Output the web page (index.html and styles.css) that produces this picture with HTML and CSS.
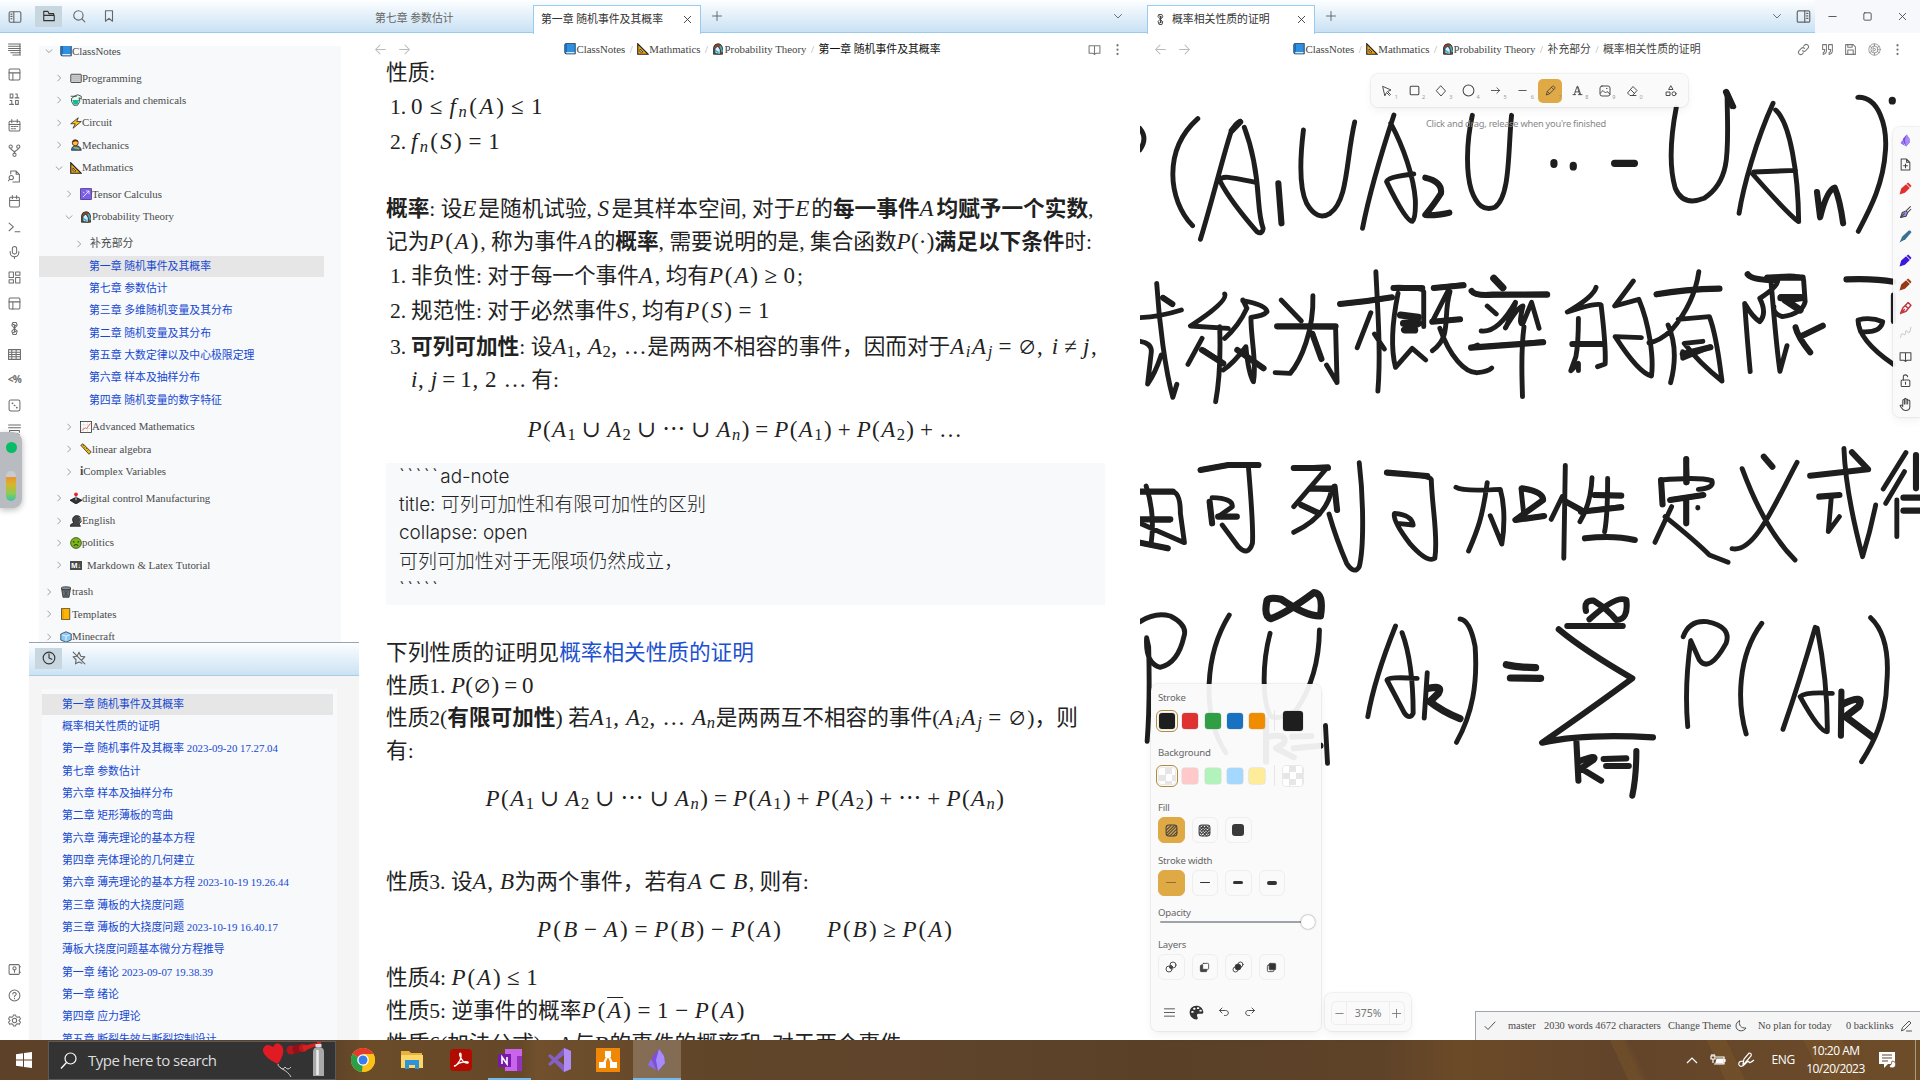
FILE: index.html
```html
<!DOCTYPE html>
<html lang="zh-CN">
<head>
<meta charset="utf-8">
<title>第一章 随机事件及其概率</title>
<link rel="stylesheet" href="styles.css">
</head>
<body>
<svg class="defs" width="0" height="0">
  <symbol id="panel" viewBox="0 0 24 24"><rect x="2" y="3" width="20" height="18" rx="2"/><path d="M10 3v18M5 7h2M5 11h2M5 15h2"/></symbol>
  <symbol id="panelr" viewBox="0 0 24 24"><rect x="2" y="3" width="20" height="18" rx="2"/><path d="M14 3v18M17 7h2M17 11h2M17 15h2"/></symbol>
  <symbol id="folder" viewBox="0 0 24 24"><path d="M3 20V4h7l2 4h8v3M3 11h18v9H3z"/></symbol>
  <symbol id="search" viewBox="0 0 24 24"><circle cx="11" cy="11" r="8"/><path d="m17 17 5 5"/></symbol>
  <symbol id="bookmark" viewBox="0 0 24 24"><path d="M6 3h12v18l-6-5-6 5z"/></symbol>
  <symbol id="x" viewBox="0 0 24 24"><path d="M5 5l14 14M19 5L5 19"/></symbol>
  <symbol id="plus" viewBox="0 0 24 24"><path d="M12 3v18M3 12h18"/></symbol>
  <symbol id="minus" viewBox="0 0 24 24"><path d="M4 12h16"/></symbol>
  <symbol id="down" viewBox="0 0 24 24"><path d="m5 9 7 7 7-7"/></symbol>
  <symbol id="right" viewBox="0 0 24 24"><path d="m9 5 7 7-7 7"/></symbol>
  <symbol id="square" viewBox="0 0 24 24"><rect x="4" y="4" width="16" height="16" rx="2"/></symbol>
  <symbol id="left-arrow" viewBox="0 0 24 24"><path d="M21 12H3m8-8-8 8 8 8"/></symbol>
  <symbol id="right-arrow" viewBox="0 0 24 24"><path d="M3 12h18m-8-8 8 8-8 8"/></symbol>
  <symbol id="openbook" viewBox="0 0 24 24"><path d="M12 6v15M12 5H2v14h7l3 2 3-2h7V5z"/></symbol>
  <symbol id="dots" viewBox="0 0 24 24"><path d="M12 4v.5M12 12v.5M12 20v.5" stroke-width="4"/></symbol>
  <symbol id="lines" viewBox="0 0 24 24"><path d="M1 2h22M1 6h22M1 10h22M1 14h22M5 18h18M9 22h14M22 2v20"/></symbol>
  <symbol id="layout" viewBox="0 0 24 24"><rect x="2" y="2" width="20" height="20" rx="2"/><path d="M2 9h20M9 9v13"/></symbol>
  <symbol id="binary" viewBox="0 0 24 24"><rect x="4" y="2" width="5" height="7"/><rect x="14" y="14" width="5" height="7"/><path d="M14 2h3v7M13 9h7M4 14h3v7M3 21h7"/></symbol>
  <symbol id="calendar" viewBox="0 0 24 24"><rect x="2" y="4" width="20" height="18" rx="2"/><path d="M2 10h20M7 1v6M17 1v6M6 14h3M11 14h3M16 14h2M6 18h3M11 18h3"/></symbol>
  <symbol id="cal" viewBox="0 0 24 24"><rect x="3" y="4" width="18" height="18" rx="2"/><path d="M3 10h18M8 1v6M16 1v6"/></symbol>
  <symbol id="fork" viewBox="0 0 24 24"><circle cx="5" cy="5" r="3"/><circle cx="19" cy="5" r="3"/><circle cx="12" cy="20" r="3"/><path d="M5 8c0 5 7 2 7 9 0-7 7-4 7-9"/></symbol>
  <symbol id="filesearch" viewBox="0 0 24 24"><path d="M5 7V2h10l6 6v14H9M15 2v6h6"/><circle cx="6" cy="14" r="4"/><path d="m3 17-2 3"/></symbol>
  <symbol id="terminal" viewBox="0 0 24 24"><path d="m2 4 8 7-8 7M13 20h9"/></symbol>
  <symbol id="mic" viewBox="0 0 24 24"><rect x="8" y="1" width="8" height="14" rx="4"/><path d="M4 10v2a8 8 0 0 0 16 0v-2M12 20v3"/></symbol>
  <symbol id="dash" viewBox="0 0 24 24"><path d="M2 2h8v10H2zM14 2h8v6h-8zM14 12h8v10h-8zM2 16h8v6H2z"/></symbol>
  <symbol id="knot" viewBox="0 0 24 24"><path d="M9 1h6l2 5-5 6-5-6zM12 12l5 5-2 6H9l-2-6z"/><path d="M9 4l6 3M9 20l6-3M12 5v14"/></symbol>
  <symbol id="table" viewBox="0 0 24 24"><path d="M1 3h22v18H1zM1 8h22M1 12h22M1 16h22M7 3v18M15 3v18"/></symbol>
  <symbol id="dice" viewBox="0 0 24 24"><rect x="2" y="2" width="20" height="20" rx="3"/><path d="M8 8h.5M12 12h.5M16 16h.5" stroke-width="3"/></symbol>
  <symbol id="rowplus" viewBox="0 0 24 24"><path d="M1 2h22M1 7h22M3 12h18v3M3 12v9h11M18 17v6M15 20h6"/></symbol>
  <symbol id="vault" viewBox="0 0 24 24"><rect x="2" y="3" width="19" height="18" rx="2"/><circle cx="12" cy="10" r="3"/><path d="M12 13v4M21 7h2M21 17h2"/></symbol>
  <symbol id="help" viewBox="0 0 24 24"><circle cx="12" cy="12" r="10"/><path d="M9 9c0-4 7-3 6 1-1 2-3 2-3 4M12 17v1"/></symbol>
  <symbol id="gear" viewBox="0 0 24 24"><circle cx="12" cy="12" r="4"/><path d="M10 2h4l1 3 3 1 3-1 2 4-3 3 3 3-2 4-3-1-3 1-1 3h-4l-1-3-3-1-3 1-2-4 3-3-3-3 2-4 3 1 3-1z"/></symbol>
  <symbol id="clock" viewBox="0 0 24 24"><circle cx="12" cy="12" r="10"/><path d="M12 5v7l5 2"/></symbol>
  <symbol id="staroff" viewBox="0 0 24 24"><path d="M2 2l20 20M9 8l3-6 3 7 7 1-5 5M8 9l-6 1 5 5-1 7 6-3 5 2"/></symbol>
  <symbol id="link" viewBox="0 0 24 24"><path d="M10 14c2 2 4 2 6 0l4-4c4-4-2-10-6-6l-2 2M14 10c-2-2-4-2-6 0l-4 4c-4 4 2 10 6 6l2-2"/></symbol>
  <symbol id="quote" viewBox="0 0 24 24"><path d="M3 3h7v11q0 6-6 7v-3q3-1 3-6H3zM14 3h7v11q0 6-6 7v-3q3-1 3-6h-4z"/></symbol>
  <symbol id="save" viewBox="0 0 24 24"><path d="M3 3h14l4 4v14H3zM7 3v5h8V3M7 21v-8h10v8"/></symbol>
  <symbol id="atom" viewBox="0 0 24 24"><g stroke-width="1.300"><circle cx="12" cy="12" r="10.500"/><circle cx="12" cy="12" r="6.500"/><path d="M10 9l5 3-5 3zM3 6l3 2M18 16l3 2M21 6l-3 2M6 16l-3 2M12 2v4M12 18v4"/></g></symbol>
  <symbol id="moon" viewBox="0 0 24 24"><path d="M9 2C7 10 12 17 22 16 17 25 2 23 2 12 2 7 5 3 9 2z"/></symbol>
  <symbol id="check" viewBox="0 0 24 24"><path d="m2 13 6 6L22 4"/></symbol>
  <symbol id="edit" viewBox="0 0 24 24"><path d="m3 21 2-6L18 2l4 4L9 19zM13 22h10"/></symbol>
  <symbol id="cursor" viewBox="0 0 24 24"><path d="m4 3 16 7-7 3 6 6-2 2-6-6-3 6z"/></symbol>
  <symbol id="diamond" viewBox="0 0 24 24"><path d="m12 2 9 10-9 10L3 12z"/></symbol>
  <symbol id="circle" viewBox="0 0 24 24"><circle cx="12" cy="12" r="10"/></symbol>
  <symbol id="arrow" viewBox="0 0 24 24"><path d="M3 12h18m-6-6 6 6-6 6"/></symbol>
  <symbol id="pencil" viewBox="0 0 24 24"><path d="m3 21 2-7L16 3c3-2 7 2 5 5L10 19zM14 5l5 5M5 14l5 5"/></symbol>
  <symbol id="lettera" viewBox="0 0 24 24"><path d="M2 21h6M14 21h8M5 21 11 3h2l6 18M12 5l5 16M7 15h8"/></symbol>
  <symbol id="image" viewBox="0 0 24 24"><rect x="2" y="2" width="20" height="20" rx="4"/><path d="m3 16 5-5 5 5 3-3 6 5M15 7h1"/></symbol>
  <symbol id="eraser" viewBox="0 0 24 24"><path d="M20 21H8l-5-5L14 3l8 8-9 10M9 9l8 8"/></symbol>
  <symbol id="shapes" viewBox="0 0 24 24"><path d="m12 2 4 7H8zM3 14h7v7H3z"/><circle cx="18" cy="17.500" r="4"/></symbol>
  <symbol id="fileplus" viewBox="0 0 24 24"><path d="M4 2h10l6 6v14H4zM14 2v6h6M12 11v7M8.500 14.500h7"/></symbol>
  <symbol id="pen" viewBox="0 0 24 24"><path d="M1 23 4 12 13 4l7 7-9 9zM14 3l3-2 6 6-2 3z" fill="currentColor" stroke="none"/></symbol>
  <symbol id="brush" viewBox="0 0 24 24"><path d="M1 23 6 12 18 1q4-1 5 3L12 17z" fill="currentColor" stroke="none"/></symbol>
  <symbol id="nib" viewBox="0 0 24 24"><path d="m3 21 3-9 7-3 3 3-3 7z" fill="#9b8ff0"/><path d="M14 8l7-7M17 11l5-5M3 21l7-7"/></symbol>
  <symbol id="nib2" viewBox="0 0 24 24"><path d="m3 21 4-10L17 1l5 5-9 11zM12 7l5 5M3 21l7-7" stroke-width="2.800"/></symbol>
  <symbol id="crystal" viewBox="0 0 24 24"><path d="M14 1 7 9l1 6 5 8 7-8-1-7z" fill="#7c50df" stroke="none"/><path d="m14 1-3 11 2 11 7-8-1-7z" fill="#a78bfa" stroke="none"/><path d="m6 11-3 6 8 5-3-7z" fill="#8f6af0" stroke="none"/></symbol>
  <symbol id="squiggle" viewBox="0 0 24 24"><path d="M3 21q1-9 5-6t4-3 4-1 6-9"/></symbol>
  <symbol id="unlock" viewBox="0 0 24 24"><rect x="4" y="11" width="16" height="12" rx="2"/><path d="M8 11V5c0-5 8-4 8 0M12 15v4"/></symbol>
  <symbol id="hand" viewBox="0 0 24 24"><path d="M7 14V5c0-3 3-3 3 0v6V3c0-3 3-3 3 0v8V4c0-3 3-3 3 0v7-5c0-3 4-3 4 0v10q0 7-8 7c-5 0-7-4-10-9 2-2 4-1 5 2"/></symbol>
  <symbol id="menu" viewBox="0 0 24 24"><path d="M1 4h22M1 12h22M1 20h22"/></symbol>
  <symbol id="undo" viewBox="0 0 24 24"><path d="M8 4 3 9l5 5M3 9h12c8 0 7 10 0 10h-2"/></symbol>
  <symbol id="redo" viewBox="0 0 24 24"><path d="m16 4 5 5-5 5M21 9H9c-8 0-7 10 0 10h2"/></symbol>
  <symbol id="palette" viewBox="0 0 24 24"><path d="M12 1C5 1 1 6 1 12s5 11 11 11c3 0 2-3 1-5-1-3 1-4 4-4 4 0 6 0 6-3C22 5 18 1 12 1z" fill="#333" stroke="none"/><path d="M5 11h1M8 6h1M14 5h1M18 9h1" stroke="#fff" stroke-width="3"/></symbol>
  <symbol id="s-back" viewBox="0 0 24 24"><circle cx="8" cy="16" r="6"/><circle cx="16" cy="8" r="6"/><circle cx="12" cy="12" r="3" fill="currentColor"/></symbol>
  <symbol id="s-down" viewBox="0 0 24 24"><rect x="3" y="7" width="14" height="14" rx="2" fill="#444"/><rect x="8" y="3" width="13" height="13" rx="2" fill="#fff"/></symbol>
  <symbol id="s-up" viewBox="0 0 24 24"><circle cx="7" cy="17" r="5"/><circle cx="17" cy="7" r="5"/><circle cx="12" cy="12" r="6" fill="#333"/></symbol>
  <symbol id="s-front" viewBox="0 0 24 24"><rect x="3" y="7" width="14" height="14" rx="2"/><rect x="7" y="3" width="14" height="14" rx="2" fill="#333"/></symbol>
  <symbol id="hatch" viewBox="0 0 24 24"><rect x="2" y="2" width="20" height="20" rx="5"/><path d="M3 11l8-8M3 17 17 3M4 21 21 4M9 22 22 9M15 22l7-7"/></symbol>
  <symbol id="cross" viewBox="0 0 24 24"><rect x="2" y="2" width="20" height="20" rx="5"/><path d="M3 11l8-8M3 17 17 3M4 21 21 4M9 22 22 9M15 22l7-7M13 3l8 8M7 3l14 14M3 4l17 17M3 9l13 13M3 15l6 6"/></symbol>

  <symbol id="e-book" viewBox="0 0 16 16"><path d="M3 .5h12v14H3q-2 0-2-2v-10q0-2 2-2z" fill="#2f8fe0" stroke="#123" /><path d="M3 13h11" stroke="#fff" stroke-width="1.500"/><path d="M3 1v11" stroke="#124f9b"/></symbol>
  <symbol id="e-kbd" viewBox="0 0 16 16"><rect x="1" y="3" width="14" height="11" rx="1" fill="#ccc" stroke="#222"/><path d="M3 6h10M3 8.500h10M4 11h8" stroke="#aaa" stroke-dasharray="1.500 .7"/></symbol>
  <symbol id="e-flask" viewBox="0 0 16 16"><path d="M6 3q4-4 9 0v4l-3-2 1 5-3 5H5l-3-5V6z" fill="#dfe" stroke="#222"/><path d="M3 8h9l-2 6H5z" fill="#17b897"/><path d="M1 3h8" stroke="#222"/></symbol>
  <symbol id="e-bolt" viewBox="0 0 16 16"><path d="M11 1 1 9h6l-3 6L15 6H9z" fill="#ffc21a" stroke="#222"/></symbol>
  <symbol id="e-person" viewBox="0 0 16 16"><path d="M2 15q0-6 6-6t7 6z" fill="#1c7fc9" stroke="#222"/><circle cx="7" cy="5" r="4" fill="#ffbd3b" stroke="#222"/><path d="M3 5q0-4 4-4t4 3l-4-1z" fill="#6a2a18"/><path d="m5 11 7 2" stroke="#f90" stroke-width="2"/></symbol>
  <symbol id="e-tri" viewBox="0 0 16 16"><path d="M1 1v14h14z" fill="#f0a30e" stroke="#222" stroke-width="1.500"/><path d="M4 8v4h4z" fill="#fff" stroke="#222"/></symbol>
  <symbol id="e-tensor" viewBox="0 0 16 16"><rect x=".5" y=".5" width="15" height="15" rx="1" fill="#7d5fe6" stroke="#35247a"/><path d="m4 12 8-8M8 4h4v4M4 5l2 2" stroke="#fff" fill="none"/></symbol>
  <symbol id="e-brain" viewBox="0 0 16 16"><path d="M2 15V6q1-5 6-5t6 6v8z" fill="#8c4a34" stroke="#222"/><path d="M4 14V7l4-3 3 5v6z" fill="#cfeeff" stroke="#222"/><path d="M4 10l5 3M11 4l3 8" stroke="#26b6ce" stroke-width="2"/></symbol>
  <symbol id="e-chart" viewBox="0 0 16 16"><rect x=".8" y=".8" width="14.400" height="14.400" fill="#fff" stroke="#222"/><path d="M1 5h14M1 10h14M5 1v14M10 1v14" stroke="#ccc" stroke-width=".6"/><path d="m2 13 5-4 2 1 5-7" fill="none" stroke="#e7422c"/></symbol>
  <symbol id="e-ruler" viewBox="0 0 16 16"><path d="m1 3 3-2 11 11-3 3z" fill="#f1b71c" stroke="#222"/><path d="m5 3-1 1m3 1-1 1m3 1-1 1m3 1-1 1" stroke="#222"/></symbol>
  <symbol id="e-joy" viewBox="0 0 16 16"><path d="m0 11 8-4 8 4-8 5z" fill="#333" stroke="#111"/><path d="M8 4v7" stroke="#999" stroke-width="2"/><circle cx="8" cy="3" r="2.500" fill="#e5232b"/></symbol>
  <symbol id="e-head" viewBox="0 0 16 16"><path d="M0 15q1-4 5-4-4-7 2-10 7-1 7 4l1 4-3 3 2 3z" fill="#444" stroke="#111"/><path d="M12 3l3 2-2 5" stroke="#aaa" fill="none"/></symbol>
  <symbol id="e-sick" viewBox="0 0 16 16"><circle cx="8" cy="8" r="7.200" fill="#7db61c" stroke="#243d05"/><path d="M4 6l2 1M12 6l-2 1M5 12q3-4 6 0" stroke="#243d05" fill="none" stroke-width="1.400"/></symbol>
  <symbol id="e-trash" viewBox="0 0 16 16"><path d="m2 3 2 12h8l2-12z" fill="#667078" stroke="#222"/><ellipse cx="8" cy="3" rx="6.500" ry="2" fill="#89939b" stroke="#222"/><path d="m5 6 6 8M11 6l-6 8M8 6v8" stroke="#333" stroke-width=".6"/></symbol>
  <symbol id="e-yellow" viewBox="0 0 16 16"><path d="M2 .5h11v15H2z" fill="#ffb400" stroke="#333"/><path d="M4 1v14" stroke="#d58b00"/></symbol>
  <symbol id="e-ice" viewBox="0 0 16 16"><path d="m1 4 7-3 7 3v8l-7 3-7-3z" fill="#8cc9f5" stroke="#234"/><path d="m3 5 5 2 5-2M8 7v6" stroke="#fff" fill="none"/></symbol>
</svg>

<div class="app">
  <header class="titlebar">
    <div class="tb-ribbon"><svg class="i s14"><use href="#panel"/></svg></div>
    <div class="tb-side">
      <span class="hbtn on"><svg class="i s14"><use href="#folder"/></svg></span>
      <span class="hbtn"><svg class="i s14"><use href="#search"/></svg></span>
      <span class="hbtn"><svg class="i s14"><use href="#bookmark"/></svg></span>
    </div>
    <div class="tb-main">
      <div class="tab first">第七章 参数估计</div>
      <div class="tab active"><span>第一章 随机事件及其概率</span><svg class="i s11"><use href="#x"/></svg></div>
      <svg class="i s12 plus"><use href="#plus"/></svg>
      <svg class="i s12 push"><use href="#down"/></svg>
    </div>
    <div class="tb-right">
      <div class="tab active excal"><svg class="i s11"><use href="#knot"/></svg><span>概率相关性质的证明</span><svg class="i s11 close"><use href="#x"/></svg></div>
      <svg class="i s12 plus"><use href="#plus"/></svg>
      <svg class="i s12 push"><use href="#down"/></svg>
      <svg class="i s15"><use href="#panelr"/></svg>
    </div>
    <div class="winctl">
      <svg class="i s11"><use href="#minus"/></svg><svg class="i s11"><use href="#square"/></svg><svg class="i s11"><use href="#x"/></svg>
    </div>
  </header>

  <div class="workspace">
    <nav class="ribbon">
      <svg class="i"><use href="#lines"/></svg><svg class="i"><use href="#layout"/></svg><svg class="i"><use href="#binary"/></svg><svg class="i"><use href="#calendar"/></svg><svg class="i"><use href="#fork"/></svg><svg class="i"><use href="#filesearch"/></svg><svg class="i"><use href="#cal"/></svg><svg class="i"><use href="#terminal"/></svg><svg class="i"><use href="#mic"/></svg><svg class="i"><use href="#dash"/></svg><svg class="i"><use href="#layout"/></svg><svg class="i"><use href="#knot"/></svg><svg class="i"><use href="#table"/></svg><span class="tmpl">&lt;%</span><svg class="i"><use href="#dice"/></svg><svg class="i"><use href="#rowplus"/></svg>
      <svg class="i bottom"><use href="#vault"/></svg><svg class="i"><use href="#help"/></svg><svg class="i"><use href="#gear"/></svg>
      <div class="meter"><i></i><b></b></div>
    </nav>

    <aside class="sidebar">
      <div class="tree">
        <div class="row"><svg class="i c"><use href="#down"/></svg><svg class="e"><use href="#e-book"/></svg>ClassNotes</div>
        <div class="kids">
          <div class="row"><svg class="i c"><use href="#right"/></svg><svg class="e"><use href="#e-kbd"/></svg>Programming</div>
          <div class="row"><svg class="i c"><use href="#right"/></svg><svg class="e"><use href="#e-flask"/></svg>materials and chemicals</div>
          <div class="row"><svg class="i c"><use href="#right"/></svg><svg class="e"><use href="#e-bolt"/></svg>Circuit</div>
          <div class="row"><svg class="i c"><use href="#right"/></svg><svg class="e"><use href="#e-person"/></svg>Mechanics</div>
          <div class="row"><svg class="i c"><use href="#down"/></svg><svg class="e"><use href="#e-tri"/></svg>Mathmatics</div>
          <div class="kids">
            <div class="row"><svg class="i c"><use href="#right"/></svg><svg class="e"><use href="#e-tensor"/></svg>Tensor Calculus</div>
            <div class="row"><svg class="i c"><use href="#down"/></svg><svg class="e"><use href="#e-brain"/></svg>Probability Theory</div>
            <div class="kids">
              <div class="row"><svg class="i c"><use href="#right"/></svg>补充部分</div>
              <div class="row file sel">第一章 随机事件及其概率</div>
              <div class="row file">第七章 参数估计</div>
              <div class="row file">第三章 多维随机变量及其分布</div>
              <div class="row file">第二章 随机变量及其分布</div>
              <div class="row file">第五章 大数定律以及中心极限定理</div>
              <div class="row file">第六章 样本及抽样分布</div>
              <div class="row file">第四章 随机变量的数字特征</div>
            </div>
            <div class="row"><svg class="i c"><use href="#right"/></svg><svg class="e"><use href="#e-chart"/></svg>Advanced Mathematics</div>
            <div class="row"><svg class="i c"><use href="#right"/></svg><svg class="e"><use href="#e-ruler"/></svg>linear algebra</div>
            <div class="row"><svg class="i c"><use href="#right"/></svg><b>i</b>Complex Variables</div>
          </div>
          <div class="row"><svg class="i c"><use href="#right"/></svg><svg class="e"><use href="#e-joy"/></svg>digital control Manufacturing</div>
          <div class="row"><svg class="i c"><use href="#right"/></svg><svg class="e"><use href="#e-head"/></svg>English</div>
          <div class="row"><svg class="i c"><use href="#right"/></svg><svg class="e"><use href="#e-sick"/></svg>politics</div>
          <div class="row"><svg class="i c"><use href="#right"/></svg><span class="md">M↓</span>Markdown &amp; Latex Tutorial</div>
        </div>
        <div class="row"><svg class="i c"><use href="#right"/></svg><svg class="e"><use href="#e-trash"/></svg>trash</div>
        <div class="row"><svg class="i c"><use href="#right"/></svg><svg class="e"><use href="#e-yellow"/></svg>Templates</div>
        <div class="row"><svg class="i c"><use href="#right"/></svg><svg class="e"><use href="#e-ice"/></svg>Minecraft</div>
      </div>
      <div class="recent-head">
        <span class="hbtn on"><svg class="i s14"><use href="#clock"/></svg></span>
        <span class="hbtn"><svg class="i s14"><use href="#staroff"/></svg></span>
      </div>
      <div class="recent">
        <div class="list">
          <div class="sel">第一章 随机事件及其概率</div>
          <div>概率相关性质的证明</div>
          <div>第一章 随机事件及其概率 2023-09-20 17.27.04</div>
          <div>第七章 参数估计</div>
          <div>第六章 样本及抽样分布</div>
          <div>第二章 矩形薄板的弯曲</div>
          <div>第六章 薄壳理论的基本方程</div>
          <div>第四章 壳体理论的几何建立</div>
          <div>第六章 薄壳理论的基本方程 2023-10-19 19.26.44</div>
          <div>第三章 薄板的大挠度问题</div>
          <div>第三章 薄板的大挠度问题 2023-10-19 16.40.17</div>
          <div>薄板大挠度问题基本微分方程推导</div>
          <div>第一章 绪论 2023-09-07 19.38.39</div>
          <div>第一章 绪论</div>
          <div>第四章 应力理论</div>
          <div>第五章 断裂失效与断裂控制设计</div>
        </div>
      </div>
    </aside>

    <main class="note">
      <div class="viewhead">
        <div class="nav"><svg class="i s13"><use href="#left-arrow"/></svg><svg class="i s13"><use href="#right-arrow"/></svg></div>
        <div class="crumbs"><svg class="e"><use href="#e-book"/></svg>ClassNotes<s>/</s><svg class="e"><use href="#e-tri"/></svg>Mathmatics<s>/</s><svg class="e"><use href="#e-brain"/></svg>Probability Theory<s>/</s><em>第一章 随机事件及其概率</em></div>
        <div class="acts"><svg class="i s13"><use href="#openbook"/></svg><svg class="i s13"><use href="#dots"/></svg></div>
      </div>
      <article class="doc">
        <p>性质:</p>
        <p class="li"><span>1.</span><span class="m" data-w="134">0<q>≤</q><i>f<sub>n</sub></i>(<i>A</i>)<q>≤</q>1</span></p>
        <p class="li"><span>2.</span><span class="m" data-w="91"><i>f<sub>n</sub></i>(<i>S</i>)<q>=</q>1</span></p>
        <p><b>概率</b>: 设<span class="m" data-w="16"><i>E</i></span>是随机试验, <span class="m" data-w="14"><i>S</i></span>是其样本空间, 对于<span class="m" data-w="16"><i>E</i></span>的<b>每一事件</b><span class="m" data-w="17"><i>A</i></span><b>均赋予一个实数</b>,</p>
        <p>记为<span class="m" data-w="51"><i>P</i>(<i>A</i>)</span>, 称为事件<span class="m" data-w="16"><i>A</i></span>的<b>概率</b>, 需要说明的是, 集合函数<span class="m" data-w="38"><i>P</i>(·)</span><b>满足以下条件</b>时:</p>
        <p class="li"><span>1.</span>非负性: 对于每一个事件<span class="m" data-w="16"><i>A</i></span>, 均有<span class="m" data-w="88"><i>P</i>(<i>A</i>)<q>≥</q>0</span>;</p>
        <p class="li"><span>2.</span>规范性: 对于必然事件<span class="m" data-w="14"><i>S</i></span>, 均有<span class="m" data-w="86"><i>P</i>(<i>S</i>)<q>=</q>1</span></p>
        <p class="li"><span>3.</span><b>可列可加性</b>: 设<span class="m" data-w="95"><i>A</i><sub>1</sub>, <i>A</i><sub>2</sub>, …</span>是两两不相容的事件，因而对于<span class="m" data-w="148"><i>A<sub>i</sub>A<sub>j</sub></i><q>=</q><tt>∅</tt>, <i>i</i><q>≠</q><i>j</i>,</span></p>
        <p class="li"><span></span><span class="m" data-w="116"><i>i</i>, <i>j</i><q>=</q>1, 2 …</span>&thinsp;有:</p>
        <p class="eq"><span class="m" data-w="436"><i>P</i>(<i>A</i><sub>1</sub><q>∪</q><i>A</i><sub>2</sub><q>∪</q>⋯<q>∪</q><i>A<sub>n</sub></i>)<q>=</q><i>P</i>(<i>A</i><sub>1</sub>)<q>+</q><i>P</i>(<i>A</i><sub>2</sub>)<q>+</q>…</span></p>
        <div class="code"><div><kbd>`````</kbd>ad-note</div><div>title: 可列可加性和有限可加性的区别</div><div>collapse: open</div><div>可列可加性对于无限项仍然成立，</div><div><kbd>`````</kbd></div></div>
        <p>下列性质的证明见<a>概率相关性质的证明</a></p>
        <p>性质1. <span class="m" data-w="83"><i>P</i>(<tt>∅</tt>)<q>=</q>0</span></p>
        <p>性质2(<b>有限可加性</b>) 若<span class="m" data-w="126"><i>A</i><sub>1</sub>, <i>A</i><sub>2</sub>, … <i>A<sub>n</sub></i></span>是两两互不相容的事件(<span class="m" data-w="88"><i>A<sub>i</sub>A<sub>j</sub></i><q>=</q><tt>∅</tt></span>)，则</p>
        <p>有:</p>
        <p class="eq"><span class="m" data-w="520"><i>P</i>(<i>A</i><sub>1</sub><q>∪</q><i>A</i><sub>2</sub><q>∪</q>⋯<q>∪</q><i>A<sub>n</sub></i>)<q>=</q><i>P</i>(<i>A</i><sub>1</sub>)<q>+</q><i>P</i>(<i>A</i><sub>2</sub>)<q>+</q>⋯<q>+</q><i>P</i>(<i>A<sub>n</sub></i>)</span></p>
        <p>性质3. 设<span class="m" data-w="42"><i>A</i>, <i>B</i></span>为两个事件，若有<span class="m" data-w="61"><i>A</i><q>⊂</q><i>B</i></span>, 则有:</p>
        <p class="eq gap"><span class="m" data-w="246"><i>P</i>(<i>B</i><q>−</q><i>A</i>)<q>=</q><i>P</i>(<i>B</i>)<q>−</q><i>P</i>(<i>A</i>)</span><span class="m" data-w="127"><i>P</i>(<i>B</i>)<q>≥</q><i>P</i>(<i>A</i>)</span></p>
        <p>性质4: <span class="m" data-w="88"><i>P</i>(<i>A</i>)<q>≤</q>1</span></p>
        <p>性质5: 逆事件的概率<span class="m" data-w="165"><i>P</i>(<i class="bar">A</i>)<q>=</q>1<q>−</q><i>P</i>(<i>A</i>)</span></p>
        <p>性质6(加法公式) : A与B的事件的概率和, 对于两个事件</p>
      </article>
    </main>

    <section class="board">
      <div class="viewhead">
        <div class="nav"><svg class="i s13"><use href="#left-arrow"/></svg><svg class="i s13"><use href="#right-arrow"/></svg></div>
        <div class="crumbs"><svg class="e"><use href="#e-book"/></svg>ClassNotes<s>/</s><svg class="e"><use href="#e-tri"/></svg>Mathmatics<s>/</s><svg class="e"><use href="#e-brain"/></svg>Probability Theory<s>/</s>补充部分<s>/</s>概率相关性质的证明</div>
        <div class="acts"><svg class="i s13"><use href="#link"/></svg><svg class="i s13"><use href="#quote"/></svg><svg class="i s13"><use href="#save"/></svg><svg class="i s13"><use href="#atom"/></svg><svg class="i s13"><use href="#dots"/></svg></div>
      </div>
      <svg class="ink" viewBox="1140 63 780 977">
        <g transform="translate(1100 0) scale(.52296 .33333)">
          <path d="M76 385Q92 415 76 450M187 356C120 450 130 600 177 677M192 718C215 600 235 470 250 398Q258 370 268 364M276 382C290 440 300 520 303 600Q306 660 312 685Q310 705 300 695C275 650 245 590 230 545Q228 530 245 532Q280 540 300 548"/>
          <path d="M389 390C382 480 380 560 395 610Q415 665 440 640C475 600 470 480 487 366M502 685C515 580 540 450 562 345M556 370C580 440 600 530 603 600Q604 655 597 664Q585 665 548 545Q550 530 600 522M712 346C700 430 700 520 710 570Q725 640 755 622C785 590 780 450 787 346M1102 322C1090 420 1088 500 1100 565Q1115 620 1155 595C1210 540 1200 440 1199 276L1212 320M1222 640C1230 560 1255 420 1287 310M1292 330C1320 370 1335 520 1336 665Q1320 650 1248 522M1250 516L1330 511M1449 292C1490 290 1505 380 1502 450C1498 550 1475 620 1450 694"/>
          <path class="w6" d="M341 550L347 670M622 533Q655 545 652 580Q640 610 622 645Q640 648 668 638M1371 576L1377 652Q1390 570 1405 563Q1415 600 1421 670M1197 276l12 42M252 392l16-26"/>
          <path class="w7" d="M868 488v5M905 496v5M984 490h38M1515 301v2"/>
        </g>
        <g transform="translate(1130 230) scale(.50383 .33333)">
          <path d="M20 263Q60 260 102 240M53 160C58 280 70 420 85 502L93 463M65 202L83 222M20 334Q45 340 42 370L35 462Q50 430 62 375M188 192Q195 215 120 288L195 295M178 290C180 380 178 450 170 515M143 325L115 403M146 360L185 400M224 210L232 235Q215 290 188 325M224 212Q270 225 272 245Q265 258 240 262C240 330 252 400 245 455Q235 430 230 350Q205 400 185 420M213 360L265 415"/>
          <path d="M300 210L340 273M363 197C365 300 340 390 318 430L288 428M292 289L408 291L411 458L390 405M362 310L380 387M488 125C492 250 498 370 492 483M417 222Q470 215 520 202M478 248L451 353M485 312L505 357M523 172Q580 170 583 185V290M532 190C520 280 518 360 527 412L560 355L587 390M603 174L662 164M632 180L600 275L655 268M635 185C620 260 640 320 600 362M615 295C635 380 665 430 690 428Q710 425 718 414"/>
          <path class="w7" d="M537 255L572 262M543 280h30L545 300h20M722 145L740 173M1292 203h40L1300 210l30 30"/>
          <path class="w6" d="M66 204L84 222M292 289H408M362 312L380 387M143 360l42 40M213 360l52 55M417 222Q470 215 520 202M523 174H580M603 174L662 166M600 275L655 268M678 183Q685 198 720 194H828M677 353L820 337M1045 193Q1100 178 1170 176M1422 148Q1480 145 1515 155M1321 292Q1325 320 1350 367M1330 320L1375 287M1226 133Q1235 152 1285 150M1265 143H1335M878 342H935M1097 372L1152 352"/>
          <path d="M678 183Q685 198 720 195L828 192M709 228L727 252M765 217Q730 310 697 303M765 220Q745 300 745 293Q770 230 780 228Q770 290 780 280L797 217L812 295M677 353L690 345M677 353L820 335M782 290C775 370 778 430 779 500M925 172Q920 200 868 246Q930 215 935 225C940 290 945 350 943 402L928 410M890 265Q890 340 885 380L875 422L890 400V422M878 344H935M999 153L962 228L1010 208C1030 280 1040 380 1035 438Q1010 430 963 320L1015 323"/>
          <path d="M1045 193Q1100 178 1170 176M1129 125Q1120 220 1075 300Q1050 335 1030 338M1068 285Q1090 360 1073 458M1088 268L1150 260C1165 320 1170 400 1175 453Q1130 400 1100 340L1137 334M1097 365V385L1152 350M1220 220Q1225 330 1231 425M1226 133Q1235 152 1285 150Q1290 165 1250 205Q1265 250 1250 275Q1235 260 1222 225M1272 150C1278 250 1282 340 1290 424L1304 347M1265 143Q1335 130 1337 150L1340 215Q1335 250 1295 260Q1275 250 1278 230M1321 292Q1325 320 1350 367M1330 320L1375 287M1422 148Q1480 145 1515 155M1515 195V275M1450 305Q1490 310 1494 275Q1470 260 1445 270Q1445 330 1515 403"/>
          <path d="M20 785H85Q100 790 100 850L108 938L20 880M32 768Q50 850 42 940M20 868L80 870M20 938L75 955M140 720L195 705L255 707M235 710C240 800 245 900 243 940Q235 980 215 950L183 885M158 820L163 880M163 803Q205 805 203 830L175 860H212M325 715L393 710L325 830M358 773L400 780Q390 860 325 907M340 825L375 850M406 770L411 840M455 698C463 800 465 950 455 1010Q445 1035 430 1000Q410 930 395 852M510 728Q600 735 598 750C600 840 612 920 605 985Q590 1000 555 940Q520 870 525 850Q560 855 562 885L530 880"/>
          <path class="w6" d="M20 785H85M20 868H80M20 938L75 955M140 720L195 705H255M158 815L163 880M175 860H212M325 714H393M358 776H400M340 825L375 850M406 770L411 840M510 728L590 738M778 775Q820 785 820 810L765 870L822 858M922 795L975 797M895 845L975 832M865 815L895 840M1057 823L1054 750M1072 810L1138 795M1104 687V757M1104 805V880"/>
          <path d="M647 772Q660 785 735 778C745 830 743 900 738 942L715 857M709 758C700 860 690 900 672 963M776 775L782 860M778 775Q820 785 820 810L765 870L822 858M864 706L861 985M836 868L858 800M865 815L895 840M917 743Q915 820 893 875M922 795L975 797M895 845L975 830M948 745Q948 860 942 905M1104 687L1106 757M1057 823L1054 750Q1130 740 1155 752Q1160 775 1128 778M1072 810L1138 795M1104 805V880M1127 832V834M1075 830L1042 937M1062 860Q1120 930 1150 975L1187 997M1324 697C1280 820 1240 970 1195 956M1215 716Q1260 900 1320 990M1417 655C1420 780 1440 900 1454 980Q1470 900 1480 825M1392 800L1386 905L1408 860M1540 668L1495 777M1537 725L1500 820M1522 810V920"/>
          <path class="w6" d="M903 925Q960 915 1002 930M1258 680L1275 710M1350 737L1465 718L1433 667M1368 800L1408 795M1560 675V775M1535 803H1568M1535 842H1568"/>
        </g>
        <g transform="translate(1130 570) scale(.50383 .33333)">
          <path d="M20 155Q50 125 80 138Q115 165 107 200Q95 280 60 292Q30 280 33 203L37 230Q40 400 34 514M197 135C150 250 140 430 190 548M278 190C262 280 262 400 280 440Q300 450 330 420Q375 320 376 180M388 466L392 580M527 168C500 270 480 370 472 440M540 188C560 270 562 370 562 430Q555 450 545 430L510 330Q510 320 570 325M590 308L584 444M655 147Q675 150 685 230C690 340 680 430 648 517"/>
          <path class="w7" d="M272 92Q265 140 280 146Q310 130 365 68Q385 70 378 138Q350 140 300 88Q275 80 272 92M593 355Q622 345 612 370L595 395Q620 425 655 446M747 284Q770 292 805 293M755 324L815 325M1415 402Q1460 370 1446 410L1420 440L1473 500"/>
          <path class="w6" d="M905 123Q900 90 920 92Q950 120 965 150Q990 150 985 90Q965 75 912 148M270 450V575M275 500Q315 490 305 520L290 535L325 562M322 500L360 498M325 535L378 527M868 168H978M851 178Q900 240 997 325Q930 400 818 518Q900 490 1038 502M886 515L890 632M890 575Q930 550 920 570L895 595L935 632M940 567L985 565M945 588L990 588M1005 543Q1005 620 997 677M1412 365L1411 497"/>
          <path d="M1098 200Q1110 150 1145 155Q1195 170 1183 220Q1150 310 1130 270L1113 212Q1100 350 1107 470M1254 160C1205 260 1205 400 1223 492M1296 478Q1330 330 1360 172M1364 175Q1385 340 1384 485Q1370 490 1330 380Q1340 365 1394 370M1470 143Q1510 200 1502 340C1500 450 1475 520 1452 575"/>
        </g>
      </svg>
      <div class="hint">Click and drag, release when you're finished</div>
      <div class="tools">
        <span><svg class="i s12"><use href="#cursor"/></svg><sub>1</sub></span><span><svg class="i s13"><use href="#square"/></svg><sub>2</sub></span><span><svg class="i s12"><use href="#diamond"/></svg><sub>3</sub></span><span><svg class="i s13"><use href="#circle"/></svg><sub>4</sub></span><span><svg class="i s11"><use href="#arrow"/></svg><sub>5</sub></span><span><svg class="i s11"><use href="#minus"/></svg><sub>6</sub></span><span class="on"><svg class="i s11"><use href="#pencil"/></svg><sub>7</sub></span><span><svg class="i s11"><use href="#lettera"/></svg><sub>8</sub></span><span><svg class="i s12"><use href="#image"/></svg><sub>9</sub></span><span><svg class="i s12"><use href="#eraser"/></svg><sub>0</sub></span><u></u><span><svg class="i s12"><use href="#shapes"/></svg></span>
      </div>
      <div class="pens">
        <svg class="i"><use href="#crystal"/></svg><svg class="i"><use href="#fileplus"/></svg><svg class="i red"><use href="#pen"/></svg><svg class="i"><use href="#nib"/></svg><svg class="i teal"><use href="#brush"/></svg><svg class="i blue"><use href="#pen"/></svg><svg class="i brown"><use href="#pen"/></svg><svg class="i rose"><use href="#nib2"/></svg><svg class="i pale"><use href="#squiggle"/></svg><svg class="i"><use href="#openbook"/></svg><svg class="i"><use href="#unlock"/></svg><svg class="i"><use href="#hand"/></svg>
      </div>
      <div class="props">
        <h4>Stroke</h4>
        <div class="sw"><i class="k sel"></i><i class="r"></i><i class="g"></i><i class="b"></i><i class="o"></i><u></u><i class="k big"></i></div>
        <h4>Background</h4>
        <div class="sw"><i class="t sel"></i><i class="r2"></i><i class="g2"></i><i class="b2"></i><i class="o2"></i><u></u><i class="t big"></i></div>
        <h4>Fill</h4>
        <div class="bt"><span class="on"><svg class="i s13"><use href="#hatch"/></svg></span><span><svg class="i s13"><use href="#cross"/></svg></span><span><em></em></span></div>
        <h4>Stroke width</h4>
        <div class="bt"><span class="on"><b class="l1"></b></span><span><b class="l2"></b></span><span><b class="l3"></b></span><span><b class="l4"></b></span></div>
        <h4>Opacity</h4>
        <div class="slider"><i></i></div>
        <h4>Layers</h4>
        <div class="bt"><span><svg class="i s12"><use href="#s-back"/></svg></span><span><svg class="i s11"><use href="#s-down"/></svg></span><span><svg class="i s12"><use href="#s-up"/></svg></span><span><svg class="i s11"><use href="#s-front"/></svg></span></div>
        <div class="foot"><svg class="i s11"><use href="#menu"/></svg><svg class="i s15"><use href="#palette"/></svg><svg class="i s12"><use href="#undo"/></svg><svg class="i s12"><use href="#redo"/></svg></div>
      </div>
      <div class="zoom"><div><svg class="i s11"><use href="#minus"/></svg><span>375%</span><svg class="i s11"><use href="#plus"/></svg></div></div>
      <div class="status"><svg class="i s12"><use href="#check"/></svg><span class="s1">master</span><span class="s2">2030 words 4672 characters</span><span class="s3">Change Theme</span><svg class="i s12"><use href="#moon"/></svg><span class="s4">No plan for today</span><span class="s5">0 backlinks</span><svg class="i s12"><use href="#edit"/></svg></div>
    </section>
  </div>

  <footer class="taskbar">
    <div class="start"><svg width="16" height="16" viewBox="0 0 16 16"><path d="M0 2.200 7 1.200V7.500H0zM8 1.100 16 0v7.500H8zM0 8.500h7v6.300l-7-1zM8 8.500h8V16l-8-1.100z" fill="#fff"/></svg></div>
    <div class="find">
      <svg width="17" height="17" viewBox="0 0 17 17"><circle cx="10.500" cy="6.500" r="5.500" fill="none" stroke="#fff" stroke-width="1.200"/><path d="M6.500 10.500 1 16.500" stroke="#fff" stroke-width="1.300"/></svg>
      <span>Type here to search</span>
      <svg class="art" width="66" height="36" viewBox="0 0 66 36"><path d="M16 22C7 18 0 12 1 7q3-7 10-2 4-7 9-1 4 6-4 18z" fill="#e01b24"/><path d="M16 22c0 5 9 5 13 13M18 25q3 4 5 0 3 4 6 0" stroke="#ccc" fill="none"/><circle cx="29" cy="8" r="4.500" fill="#b3161d"/><circle cx="35" cy="7" r="4.500" fill="#8f1219"/><circle cx="41" cy="6" r="4" fill="#b8191f"/><path d="M40 4l14-3v3l-12 5z" fill="#d82020"/><path d="M51 10q0-5 5.500-5t5.500 5v24H51z" fill="#a9a9a9"/><path d="M55.500 8v25" stroke="#eee" stroke-width="2.500"/><path d="M53.500 2h6v3h-6z" fill="#ddd"/><path d="M55 0h4v2h-4z" fill="#e22"/></svg>
    </div>
    <div class="apps">
      <span><svg width="24" height="24" viewBox="0 0 24 24"><circle cx="12" cy="12" r="12" fill="#fbc116"/><path d="M12 12 1.600 6A12 12 0 0 1 22.400 6z" fill="#e33b2e"/><path d="M12 12 1.600 6a12 12 0 0 0 9.400 18z" fill="#2a9f48"/><path d="M12 12h6l-7 12h1a12 12 0 0 0 10.400-18H12z" fill="#fbc116"/><circle cx="12" cy="12" r="5.800" fill="#fff"/><circle cx="12" cy="12" r="4.500" fill="#3a7cec"/></svg></span>
      <span><svg width="22" height="20" viewBox="0 0 22 20"><path d="M0 1h8l2 2h11v15H0z" fill="#e8b33c"/><path d="M0 5h22v13H0z" fill="#fcd667"/><path d="M4 18v-8h14v9h-4v-4H8v4H4z" fill="#2e93d8"/></svg></span>
      <span><svg width="22" height="22" viewBox="0 0 22 22"><rect width="22" height="22" rx="4" fill="#b30b00"/><path d="M4 17c5-2 8-8 7-12-1-2-2 0-1 2 1 4 5 8 8 7 2-2-8-2-13 3z" fill="none" stroke="#fff" stroke-width="1.300"/></svg></span>
      <span class="run"><svg width="24" height="22" viewBox="0 0 24 22"><path d="M7 0h17v22H7z" fill="#ca64ea"/><path d="M19 7h5v15h-5z" fill="#9332bf"/><rect y="5" width="13" height="13" fill="#7719aa"/><path d="M4 15V8l5 7V8" fill="none" stroke="#fff" stroke-width="1.600"/></svg></span>
      <span><svg width="24" height="24" viewBox="0 0 24 24"><path d="m17 0 7 3v18l-7 3L1 8l2-2 14 11V7L3 18l-2-2z" fill="#865fc5"/><path d="m17 0 7 3v18l-7 3z" fill="#b18cf2"/></svg></span>
      <span><svg width="24" height="24" viewBox="0 0 24 24"><path d="M0 0h24v24H0z" fill="#f08705"/><path d="m12 7-5 10M12 7l5 10" stroke="#fff" stroke-width="2"/><path d="M9 3h6v6H9zM3 14h7v6H3zM14 14h7v6h-7z" fill="#fff"/></svg></span>
      <span class="run cur"><svg width="24" height="24" viewBox="0 0 24 24"><use href="#crystal"/></svg></span>
    </div>
    <div class="tray">
      <svg width="12" height="8" viewBox="0 0 12 8"><path d="m1 7 5-5 5 5"/></svg>
      <svg width="16" height="12" viewBox="0 0 16 12"><path d="M6 3h8v7H4M15 5v3M1 2h4v3H1zM2 0v2M4 0v2M3 5v4"/><path d="M7 5h6v4H6z" fill="#fff"/></svg>
      <svg width="17" height="16" viewBox="0 0 17 16"><path d="m5 12 1-5 5-6q3 0 2 3l-6 7zM5 9q-5 0-4 4 2 3 6-1t4-2 5-2"/></svg>
      <span class="lang">ENG</span>
      <span class="time">10:20 AM<br>10/20/2023</span>
      <svg width="17" height="17" viewBox="0 0 17 17"><path d="M0 0h16v12H9l-4 4v-4H0z" fill="#fff" stroke="none"/><path d="M3 3h10M3 6h10M3 9h6" stroke="#614529"/><path d="M13 9a3.500 3.500 0 1 1-3 5q3-1 3-5z" fill="#fff" stroke="#614529" stroke-width=".7"/></svg>
      <u></u>
    </div>
  </footer>
</div>
<script src="fit.js"></script>
</body>
</html>
```
FILE: styles.css
```css
* { box-sizing: border-box; }
body { margin: 0; background: #fff; color: #4a4a4a; font: 10.85px/1.2 "Liberation Serif", "Noto Sans CJK SC", serif; overflow: hidden; }
.app { width: 1920px; height: 1080px; display: flex; flex-direction: column; }
.defs { display: none; }
.i { width: 13px; height: 13px; flex: none; fill: none; stroke: currentColor; stroke-width: 1.9; stroke-linejoin: round; stroke-linecap: round; overflow: visible; }
.s11 { width: 11px; height: 11px; } .s12 { width: 12px; height: 12px; } .s13 { width: 13px; height: 13px; } .s14 { width: 14px; height: 14px; } .s15 { width: 15px; height: 15px; }
.e { width: 12px; height: 12px; flex: none; margin-right: 0; }
p, h4 { margin: 0; }

.titlebar { height: 33px; flex: none; display: flex; border-bottom: 1px solid #98cbee; background: linear-gradient(#fdfeff, #e3f0fa 50%, #c9e1f4); color: #666; }
.tb-ribbon { width: 29px; display: flex; align-items: center; justify-content: center; padding-top: 1px; }
.tb-side { width: 330px; display: flex; gap: 2px; padding: 6px 0 0 6px; }
.hbtn { width: 27px; height: 21px; display: flex; align-items: center; justify-content: center; padding-bottom: 1px; }
.hbtn + .hbtn { margin-left: 1px; }
.hbtn.on { background: #c8d6e0; color: #333; }
.tb-main { width: 781px; display: flex; align-items: center; }
.tab { height: 28px; margin-top: 5px; display: flex; align-items: center; flex: none; }
.tab.first { width: 174px; padding-left: 16px; }
.tab.active { width: 168px; padding: 0 7px 2px; justify-content: space-between; background: #fff; border: 1px solid #98cbee; border-bottom: 0; height: 29px; margin-bottom: -1px; align-self: flex-start; color: #333; }
.plus { margin-left: 10px; }
.push { margin-left: auto; margin-right: 16px; }
.tb-right { width: 675px; display: flex; align-items: center; padding-left: 7px; }
.tb-right .push { margin-right: 13px; }
.tb-right .s15 { margin-right: 4px; }
.tab.excal { justify-content: flex-start; gap: 6px; }
.tab.excal .close { margin-left: auto; }
.winctl { width: 105px; margin-bottom: -1px; background: #f6f8fc; display: flex; align-items: center; justify-content: space-between; padding: 0 12px; color: #444; }

.workspace { height: 1007px; display: flex; }
.ribbon { width: 29px; position: relative; display: flex; flex-direction: column; align-items: center; gap: 12.45px; padding: 9.500px 0 13px; color: #6c6c6c; }
.ribbon .bottom { margin-top: auto; }
.tmpl { height: 13px; font: bold 10px/13px "Noto Sans", sans-serif; letter-spacing: -.5px; }
.meter { position: absolute; left: 0; top: 399px; width: 22px; height: 76px; border-radius: 0 9px 9px 0; background: #b8bbc0; box-shadow: 0 2px 6px #0004; display: flex; flex-direction: column; align-items: center; padding-top: 10px; }
.meter i { width: 11px; height: 11px; border-radius: 50%; background: #04bd65; }
.meter b { width: 10px; height: 30px; border-radius: 5px; margin-top: 18px; background: linear-gradient(#c8cbd0 20%, #e99430 20%, #d6b52b 45%, #8fcb55 75%, #35c3ae); }

.sidebar { width: 330px; display: flex; flex-direction: column; }
.tree { width: 302px; height: 596px; margin: 13px 0 0 10px; flex: none; background: #f7f9fb; overflow: hidden; }
.tree > .row:first-child { margin-top: -6px; }
.row { height: 22.38px; display: flex; align-items: center; white-space: nowrap; padding-left: 5px; width: max-content; }
.row .c { width: 10px; height: 10px; margin-right: 6px; color: #888; }
.row b { font-size: 12px; }
.kids { padding: 4.500px 0 4.200px 10px; }
.row.file { color: #1648d2; padding-left: 20px; }
.row.sel { background: #e6e6e6; width: 285px; height: 21px; margin: .7px 0 .7px -30px; padding-left: 50px; }
.md { font: bold 7px/9px "Open Sans", sans-serif; background: #4a4a4a; color: #fff; padding: 0 1px; margin: 0 5px 0 0; }
.recent-head { height: 34px; flex: none; display: flex; gap: 2px; padding: 5px 0 0 6px; border-top: 1px solid #98a3ae; border-bottom: 1px solid #a5cde8; background: linear-gradient(#fdfeff, #e3f0fa 50%, #cce2f3); color: #666; }
.recent { flex: 1; min-height: 0; background: #f5f5f5; padding: 13px 0 0 13px; overflow: hidden; }
.list { width: 295px; height: 360px; background: #f7f9fb; padding-top: 4px; color: #1648d2; white-space: nowrap; }
.list div { height: 22.35px; display: flex; align-items: center; padding-left: 20px; }
.list .sel { background: #e6e6e6; width: 291px; height: 21px; margin: .6px 0 .75px; }

.viewhead { height: 30px; flex: none; display: grid; grid-template-columns: 100px 1fr 100px; align-items: center; padding: 2px 16px 0 15px; }
.nav { display: flex; gap: 11px; color: #bbb; }
.crumbs { display: flex; justify-content: center; align-items: center; white-space: nowrap; color: #444; }
.crumbs s { text-decoration: none; color: #aaa; margin: 0 4.500px; }
.crumbs em { font-style: normal; color: #111; }
.acts { display: flex; justify-content: flex-end; gap: 10.500px; color: #777; }
.note { width: 781px; display: flex; flex-direction: column; overflow: hidden; }
.note .crumbs { padding-left: 7px; }
.doc { height: 977px; margin: 0 35px 0 27px; color: #222; font-size: 21.65px; display: grid; align-items: end; grid-template-rows: 27px 34px 35px 66.5px 33.5px 34px 35px 36px 32.5px 50px 158.5px 64.5px 33px 32.5px 32.5px 48px 83px 47px 49px 33px 33px; }
.doc p { height: 33px; line-height: 33px; white-space: nowrap; }
.li { display: flex; align-items: baseline; }
.li > span:first-child { width: 25px; padding-left: 4px; flex: none; }
.eq { text-align: center; }
.gap { display: flex; justify-content: center; gap: 44px; align-items: center; }
.doc a { color: #2050d0; }
.m { font-size: 23px; line-height: 1; }
.doc .m { flex: none; }
.m sub { font-size: .72em; line-height: 0; vertical-align: -.2em; }
.m tt { font-family: "Liberation Serif", "DejaVu Serif", serif; font-size: .8em; }
.m q { quotes: none; margin: 0 .2em; font-family: "Liberation Serif", "DejaVu Serif", serif; }
.m q::before, .m q::after { content: none; }
.bar { text-decoration: overline; text-decoration-thickness: 1px; }
.code { height: 142px; background: #f7f9fb; padding: 0 13px; font: 300 18.95px/28.2px "Inter", "Noto Sans CJK SC", sans-serif; color: #222; width: 719px; }
.code kbd { font: inherit; letter-spacing: 2.400px; }

.board { width: 780px; position: relative; display: flex; flex-direction: column; }
.board .viewhead { grid-template-columns: 40px 1fr 130px; padding-left: 14px; }
.board .crumbs { padding: 0 0 0 26px; }
.ink { width: 780px; height: 977px; fill: none; stroke: #1e1e1e; stroke-width: 4.900; stroke-linecap: round; stroke-linejoin: round; overflow: hidden; }
.ink path { vector-effect: non-scaling-stroke; }
.ink .w6 { stroke-width: 6.100; } .ink .w7 { stroke-width: 7.200; }
.tools, .pens, .props, .zoom { position: absolute; background: rgba(250,250,250,.94); border-radius: 7px; box-shadow: 0 0 2px #0003, 0 4px 10px #0000000d; font-family: "Noto Sans", sans-serif; color: #444; }
.tools { left: 231px; top: 41px; width: 317px; height: 33px; display: flex; align-items: center; padding: 0 4px; }
.tools span { width: 24px; height: 24px; margin-right: 3.200px; border-radius: 5px; display: flex; align-items: center; justify-content: center; position: relative; flex: none; }
.tools sub { position: absolute; right: 1px; bottom: 2px; font-size: 5.500px; line-height: 8px; color: #999; }
.tools .on { background: #dfa945; }
.tools u { width: 1px; height: 20px; background: #e6e6e6; margin: 0 7px 0 5px; }
.hint { position: absolute; left: 286px; top: 84px; font: 9.300px/14px "Noto Sans", sans-serif; color: #888; white-space: nowrap; width: 180px; letter-spacing: -.26px; }
.pens { left: 753px; top: 94px; width: 27px; height: 290px; border-radius: 7px 0 0 7px; display: flex; flex-direction: column; align-items: center; justify-content: space-between; padding: 7px 2px 6px 0; }
.red { color: #e03131; } .teal { color: #3b7190; } .blue { color: #3d18dc; } .brown { color: #973816; } .rose { color: #c23b45; } .pale { color: #ccc; }
.props { left: 11px; top: 651px; width: 170px; height: 347px; padding: 7px 7px 0; display: flex; flex-direction: column; }
.props h4 { font-weight: 400; font-size: 9.600px; height: 14px; line-height: 14px; color: #666; flex: none; letter-spacing: -.2px; }
.sw { height: 21px; margin: 5px 0 15px -2px; display: flex; align-items: center; flex: none; }
.sw i { width: 16px; height: 16px; border-radius: 3px; margin-left: 6.300px; box-shadow: 0 0 0 .5px #0002; flex: none; }
.sw i.sel { margin: 0 1px 0 3px; outline: 1px solid #b38a38; outline-offset: 2px; }
.sw u { width: 1px; height: 21px; background: #e6e6e6; margin: 0 8px 0 9px; }
.sw i.big { width: 20px; height: 20px; margin-left: 0; }
.k { background: #1e1e1e; } .r { background: #e03131; } .g { background: #2f9e44; } .b { background: #1971c2; } .o { background: #f08c00; }
.r2 { background: #ffc9c9; } .g2 { background: #b2f2bb; } .b2 { background: #a5d8ff; } .o2 { background: #ffec99; }
.t { background: repeating-conic-gradient(#e6e6e6 0 25%, #fff 0 50%) 0 0 / 13px 13px; }
.bt { display: flex; gap: 7px; height: 26px; margin: 2px 0 10.500px; flex: none; }
.bt span { width: 26.500px; height: 26px; border-radius: 6px; border: 1px solid #eee; display: flex; align-items: center; justify-content: center; }
.bt .on { background: #dfa945; border-color: #dfa945; }
.bt em { width: 12px; height: 12px; border-radius: 3px; background: #3a3a3a; }
.bt b { width: 10px; background: #333; border-radius: 2px; }
.bt .l1 { height: 1px; background: #90702f; } .bt .l2 { height: 1.500px; } .bt .l3 { height: 2.500px; } .bt .l4 { height: 4px; }
.slider { height: 2px; width: 144px; margin: 1px 0 15px 2px; background: #9ea3aa; border-radius: 1px; flex: none; display: flex; align-items: center; justify-content: flex-end; }
.slider i { width: 14px; height: 14px; border-radius: 50%; background: #fff; box-shadow: 0 0 2px #0008; flex: none; margin-right: -11px; }
.foot { display: flex; align-items: center; gap: 14px; padding: 14px 0 0 6px; height: 29px; }
.zoom { left: 185px; top: 960px; width: 86px; height: 38px; padding: 8px 6px; }
.zoom div { height: 24px; border: 1px solid #eee; border-radius: 5px; display: flex; align-items: center; justify-content: space-between; padding: 0 2px; font-size: 10.500px; color: #777; }
.zoom span { border: solid #eee; border-width: 0 1px; height: 22px; line-height: 22px; width: 44px; text-align: center; }
.status { position: absolute; right: 0; bottom: 0; width: 445px; height: 29px; background: #f5f5f5; border: solid #9ea5af; border-width: 1px 0 0 1px; display: flex; align-items: center; padding-left: 8px; white-space: nowrap; font-size: 10.400px; }
.status span { flex: none; }
.s1 { width: 36px; margin-left: 12px; } .s2 { width: 124px; } .s3 { width: 67px; } .s4 { margin-left: 11px; width: 88px; } .s5 { width: 54px; }

.taskbar { height: 40px; display: flex; align-items: center; color: #fff; font-family: "Open Sans", sans-serif; background:
  linear-gradient(65deg, transparent 84%, #7d582b66 84% 84.600%, transparent 85% 89%, #7a552a88 89% 90%, transparent 90% 94%, #7a552988 94% 96%, transparent 96%),
  linear-gradient(90deg, #5d4229 0 17%, #6b4c29 19%, #654829 27%, #70502d 28%, #614529 37%, #5f442c 50%, #594027 60%, #5f4329 72%, #6b4a27 76%, #62442a 84%, #6e4d29); }
.start { width: 48px; display: flex; justify-content: center; }
.find { width: 288px; height: 39px; background: #333; border: 1px solid #5a5a5a; display: flex; align-items: center; padding-left: 11px; gap: 11px; font-size: 15px; color: #ddd; white-space: nowrap; }
.find span { width: 128px; letter-spacing: -.5px; margin-right: 35px; }
.apps { display: flex; height: 40px; margin-left: 2px; }
.apps span { width: 49px; display: flex; align-items: center; justify-content: center; border: solid transparent; border-width: 2px 0; }
.apps .run { border-bottom-color: #76b9ed; width: 43px; margin: 0 3px; }
.apps .run.cur { background: #fff3; width: 48px; margin: 0 0 0 1px; }
.tray { margin-left: auto; display: flex; align-items: center; height: 40px; font-size: 12px; }
.tray svg { fill: none; stroke: #fff; stroke-width: 1.200; margin-right: 12px; }
.tray .lang { margin: 0 11px 0 4px; letter-spacing: -.3px; }
.time { text-align: center; line-height: 18px; letter-spacing: -.5px; margin-right: 14px; width: 59px; white-space: nowrap; }
.tray u { width: 1px; height: 40px; background: #a99a86; margin: 0 4px 0 7px; }
```
FILE: fit.js
```js
// Set each formula to its typeset width by spreading the difference over its characters.
document.querySelectorAll('[data-w]').forEach(function (el) {
  var want = Number(el.dataset.w);
  var have = el.getBoundingClientRect().width;
  el.style.letterSpacing = (want - have) / el.textContent.length + 'px';
});
```
